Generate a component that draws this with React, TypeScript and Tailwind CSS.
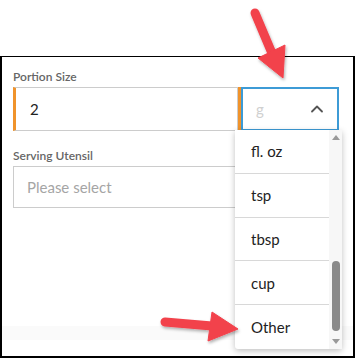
import { ChevronUp } from 'lucide-react';

const units = ['fl. oz', 'tsp', 'tbsp', 'cup', 'Other'];

function Arrows() {
  return (
    <svg className="absolute inset-0 pointer-events-none" width={356} height={359} viewBox="0 0 356 359">
      <defs>
        <filter id="arrowShadow" x="-20%" y="-20%" width="140%" height="140%">
          <feDropShadow dx="1" dy="2" stdDeviation="1.5" floodColor="#000" floodOpacity="0.3" />
        </filter>
      </defs>
      <g filter="url(#arrowShadow)" fill="#f2424c" stroke="#f2424c">
        <line x1="255" y1="13" x2="274" y2="58" strokeWidth="9" strokeLinecap="round" />
        <polygon points="258,58 285,45 283,78" strokeWidth="1" strokeLinejoin="round" />
        <line x1="165" y1="322" x2="212" y2="326" strokeWidth="9" strokeLinecap="round" />
        <polygon points="212,312 208,341 238,329" strokeWidth="1" strokeLinejoin="round" />
      </g>
    </svg>
  );
}

export default function App() {
  return (
    <div className="relative w-[356px] h-[359px] bg-white pt-[56px] overflow-hidden" style={{ fontFamily: 'Lato, "Noto Sans", sans-serif' }}>
      <div className="w-[355px] h-[302px] border-2 border-t-[1.5px] border-black flex flex-col">
        <div className="pl-[11px] pt-[12px] pr-[14px]">
          <div className="text-[12px] font-semibold text-[#666] leading-[16px] mb-[2px]">Portion Size</div>
          <div className="flex h-[44px]">
            <div className="flex-1 flex items-center border border-[#ccc] border-l-[3px] border-l-[#f0932b] pl-[14px] text-[15px] text-[#222]">
              2
            </div>
            <div className="w-[101px] flex">
              <div className="w-[3px] bg-[#f0932b]" />
              <div className="flex-1 flex items-center justify-between border-2 border-[#3d9bd6] pl-[13px] pr-[10px] text-[15px] text-[#d0d0d0]">
                <span>g</span>
                <ChevronUp className="w-[20px] h-[20px] text-[#555]" strokeWidth={2.2} />
              </div>
            </div>
          </div>
          <div className="text-[12px] font-semibold text-[#666] leading-[16px] mt-[17px] mb-[2px]">Serving Utensil</div>
          <div className="h-[42px] flex items-center border border-[#ccc] pl-[13px] text-[15px] text-[#a5a5a5]">
            Please select
          </div>
        </div>
        <div className="mt-[118px] h-[14px] bg-[#fafafa]" />
      </div>

      <div className="absolute left-[235px] top-[130px] w-[107px] h-[219px] bg-white shadow-[0_2px_6px_rgba(0,0,0,0.25)] rounded-b-[3px] flex">
        <div className="flex-1 flex flex-col">
          {units.map((u, i) => (
            <div
              key={u}
              className={`h-[44px] flex items-center pl-[16px] text-[15px] text-[#222] ${i < units.length - 1 ? 'border-b border-[#d8d8d8]' : ''}`}
            >
              {u}
            </div>
          ))}
        </div>
        <div className="w-[13px] bg-[#f7f7f7] flex flex-col items-center py-[5px]">
          <div className="w-0 h-0 border-l-[4px] border-r-[4px] border-b-[5px] border-l-transparent border-r-transparent border-b-[#999]" />
          <div className="flex-1 w-full flex flex-col px-[1px]">
            <div className="mt-[121px] h-[70px] w-[8px] mx-auto rounded-full bg-[#8a8a8a]" />
          </div>
          <div className="w-0 h-0 border-l-[4px] border-r-[4px] border-t-[5px] border-l-transparent border-r-transparent border-t-[#999]" />
        </div>
      </div>

      <Arrows />
    </div>
  );
}
